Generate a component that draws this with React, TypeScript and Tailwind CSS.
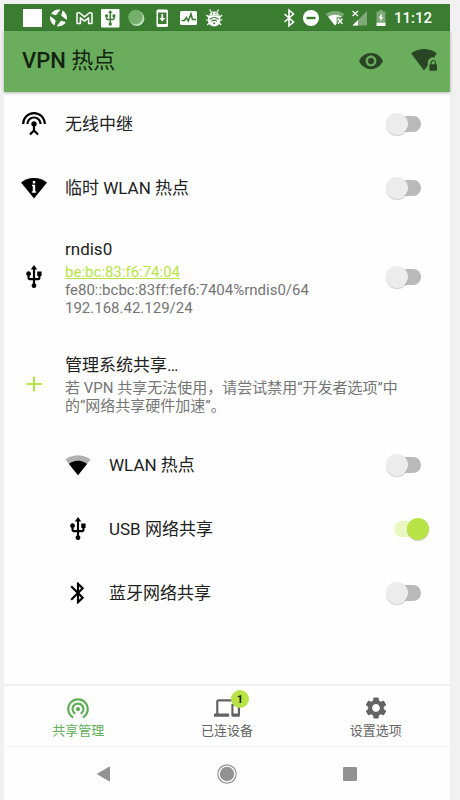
import { useState, type ReactNode } from "react";
import {
  MdAdd,
  MdBluetooth,
  MdDevices,
  MdSettings,
  MdSettingsInputAntenna,
  MdUsb,
  MdVisibility,
  MdWifiTethering,
} from "react-icons/md";

const ICON = "size-[26px] shrink-0";

function WifiLockIcon() {
  return (
    <svg viewBox="0 1 24 24" fill="currentColor" className={ICON} aria-hidden="true">
      <path d="M23 16v-1.500c0-1.400-1.100-2.500-2.500-2.500S18 13.100 18 14.500V16c-.5 0-1 .5-1 1v4c0 .5.5 1 1 1h5c.5 0 1-.5 1-1v-4c0-.5-.5-1-1-1zm-1 0h-3v-1.500c0-.8.7-1.500 1.500-1.500s1.500.7 1.500 1.500V16z" />
      <path d="M15.500 14.500c0-2.800 2.200-5 5-5 .4 0 .7 0 1 .1L23.800 6c-.4-.3-4.900-4-11.800-4C5.300 2 .6 5.700.2 6L12 21.700l3.500-4.500v-2.700z" />
    </svg>
  );
}

function WifiInfoIcon() {
  return (
    <svg viewBox="0 0 24 24" fill="currentColor" className={ICON} aria-hidden="true">
      <path d="M12 2.800C6.950 2.800 3.150 4.600 0 7l12 14.800L24 7C20.850 4.600 17.050 2.800 12 2.800z" />
      <path d="M10.900 5.600h2.200v2.200h-2.200zM10.100 9h3v6h.9v1.400h-4V15h.9v-4.600h-.8z" fill="#fefefe" />
    </svg>
  );
}

function WifiMediumIcon() {
  return (
    <svg viewBox="0 0 24 24" fill="currentColor" className={ICON} aria-hidden="true">
      <path
        fillOpacity=".3"
        d="M12.010 21.490L23.640 7c-.45-.34-4.930-4-11.640-4C5.280 3 .81 6.660.36 7l11.630 14.490.01.01.01-.01z"
      />
      <path d="M3.530 10.950l8.460 10.540.01.01.01-.01 8.460-10.540C20.040 10.620 16.810 8 12 8c-4.810 0-8.040 2.620-8.470 2.950z" />
    </svg>
  );
}

function StatusIcon({ children }: { children: ReactNode }) {
  return (
    <svg viewBox="0 0 20 20" className="size-5 shrink-0" fill="currentColor" aria-hidden="true">
      {children}
    </svg>
  );
}

function StatusBar() {
  return (
    <div className="flex h-[27px] items-center justify-between bg-[#3a7d31] px-[18px] text-white">
      <div className="flex items-center gap-[6px]">
        <StatusIcon>
          <rect x="1" y="1" width="19" height="18" />
        </StatusIcon>
        <StatusIcon>
          <circle cx="10.500" cy="10" r="8.500" />
          <g fill="#3a7d31">
            <circle cx="10.500" cy="10" r="3.800" />
            <path d="M8.500 6.600 12.800 1.200l1.800.8-1.200 5z" />
            <path d="M14 8.300l5.200 4-.9 1.900-5.200-1.500z" />
            <path d="M12.500 13.400 8.200 18.800l-1.800-.8 1.200-5z" />
            <path d="M7 11.700 1.800 7.700l.9-1.900 5.200 1.500z" />
          </g>
        </StatusIcon>
        <StatusIcon>
          <path
            d="M3 15.500V5.200l2.200-.7 5.300 4.300 5.300-4.300 2.200.7v10.300h-3.400V9.800l-4.100 3.300-4.100-3.300v5.700z"
            fill="none"
            stroke="currentColor"
            strokeWidth="1.500"
            strokeLinejoin="round"
          />
        </StatusIcon>
        <StatusIcon>
          <rect x="1" y="1" width="18.500" height="18.500" rx="1" />
          <g transform="translate(1.400 1.200) scale(.74)" fill="#3a7d31">
            <path d="M15 7v4h1v2h-3V5h2l-3-4-3 4h2v8H8v-2.070c.7-.37 1.200-1.080 1.200-1.930 0-1.210-.99-2.200-2.200-2.200-1.210 0-2.200.99-2.200 2.200 0 .85.5 1.560 1.200 1.930V13c0 1.110.89 2 2 2h3v3.050c-.71.370-1.200 1.100-1.200 1.950 0 1.220.99 2.200 2.200 2.200 1.210 0 2.200-.98 2.200-2.200 0-.85-.49-1.580-1.200-1.950V15h3c1.110 0 2-.89 2-2v-2h1V7h-4z" />
          </g>
        </StatusIcon>
        <StatusIcon>
          <circle cx="10.800" cy="10.400" r="7.600" fill="#c8e0c4" />
          <circle cx="9.600" cy="9.200" r="7" fill="#74b06c" stroke="#8fc088" strokeDasharray="1 1" />
        </StatusIcon>
        <StatusIcon>
          <rect x="4.500" y="1.500" width="11.500" height="17.500" rx="1.500" />
          <rect x="6" y="4.500" width="8.500" height="11.500" fill="#3a7d31" />
          <path d="M9.400 6h1.700v4h2.200l-3 3.600L7.200 10h2.200z" />
        </StatusIcon>
        <StatusIcon>
          <rect x="2" y="3" width="17" height="14" rx="1.500" />
          <path d="M3.500 12.500h3l1.800-3 2 3.500L13 6l1.500 5.500H18" fill="none" stroke="#3a7d31" strokeWidth="1.600" />
        </StatusIcon>
        <StatusIcon>
          <path d="M5.500 7.500C5.500 4.800 7.500 3.400 10.200 3.400s4.700 1.400 4.700 4.100z" />
          <path d="M4 7.500h12.400v4.800a6.200 6.200 0 0 1-12.400 0z" />
          <path
            d="M7.300 4 5.800 1.500M13.100 4l1.500-2.500M4.500 9 2.300 7M15.900 9l2.200-2M4.500 12H2M15.900 12h2.500M5.200 15l-2 2M15.200 15l2 2"
            fill="none"
            stroke="currentColor"
            strokeWidth="1.200"
          />
          <path
            d="M5.800 11.200c2.500-2.300 6.300-2.300 8.800 0M7.500 13.400c1.600-1.400 3.800-1.400 5.400 0"
            fill="none"
            stroke="#3a7d31"
            strokeWidth="1.200"
          />
          <circle cx="10.200" cy="15.200" r="1" fill="#3a7d31" />
          <circle cx="8.500" cy="5.800" r=".7" fill="#3a7d31" />
          <circle cx="11.900" cy="5.800" r=".7" fill="#3a7d31" />
        </StatusIcon>
      </div>
      <div className="flex items-center gap-[3px]">
        <StatusIcon>
          <path
            d="m5.500 6 9 8L10 17.800V2.200L14.500 6l-9 8"
            fill="none"
            stroke="currentColor"
            strokeWidth="1.600"
          />
        </StatusIcon>
        <StatusIcon>
          <circle cx="9" cy="10" r="8" />
          <rect x="4.500" y="8.800" width="9" height="2.400" fill="#3a7d31" />
        </StatusIcon>
        <StatusIcon>
          <path d="M10 17.500.8 6.200C6 2 14 2 19.200 6.200z" opacity=".35" />
          <path d="M10 17.500 3.200 8.900c4-3 9.600-3 13.600 0h-5.300v6.700z" />
          <path d="m13 10.800 4.500 5M17.500 10.800l-4.500 5" fill="none" stroke="currentColor" strokeWidth="1.400" />
        </StatusIcon>
        <StatusIcon>
          <path d="M19 3v14.500H4.500z" opacity=".35" />
          <path d="M10 12v5.500H4.500z" />
          <path d="m4.500 3 5.500 5M10 3 4.500 8" fill="none" stroke="currentColor" strokeWidth="1.200" />
        </StatusIcon>
        <StatusIcon>
          <path d="M8 2h4v1.500h2.500V14h-9V3.500H8z" opacity=".35" />
          <path d="M5.500 14.500h9V18h-9z" />
          <path d="M11 5 7.500 10h2l-.5 3.500L12.500 9h-2z" />
        </StatusIcon>
        <time className="text-[15px] leading-5 font-medium">11:12</time>
      </div>
    </div>
  );
}

function AppBar() {
  return (
    <header className="relative flex h-[61px] items-center justify-between bg-[#69ad5d] pr-[13px] pb-0.5 pl-[18px] shadow-[0_1px_3px_rgba(0,0,0,0.3)]">
      <h1 className="text-[22px] leading-7 text-[#12240f]">
        <span className="font-medium">VPN</span> 热点
      </h1>
      <div className="flex items-center gap-[27px] text-[#2a4525]">
        <button type="button" aria-label="显示">
          <MdVisibility className={ICON} />
        </button>
        <button type="button" aria-label="WLAN">
          <WifiLockIcon />
        </button>
      </div>
    </header>
  );
}

interface SwitchRowProps {
  id: string;
  icon: ReactNode;
  title: string;
  on?: boolean;
  nested?: boolean;
  children?: ReactNode;
}

function SwitchRow({ id, icon, title, on = false, nested = false, children }: SwitchRowProps) {
  const [checked, setChecked] = useState(on);
  return (
    <li
      className={`flex min-h-16 items-center gap-[18px] py-[17px] pr-[21px] ${nested ? "pl-[61px]" : "pl-[17px]"}`}
    >
      {icon}
      <div className="min-w-0 flex-1">
        <label htmlFor={id} className="block text-[17px] leading-6 text-[#212121]">
          {title}
        </label>
        {children}
      </div>
      <input
        id={id}
        type="checkbox"
        role="switch"
        checked={checked}
        onChange={(event) => setChecked(event.target.checked)}
        className="relative h-[22px] w-[43px] shrink-0 appearance-none before:absolute before:inset-x-2 before:inset-y-[3px] before:rounded-full before:bg-[#b9b9b9] after:absolute after:top-0 after:left-0 after:size-[22px] after:rounded-full after:bg-[#ececec] after:shadow-[0_1px_1px_rgba(0,0,0,0.2)] checked:before:bg-[#e9f7c0] checked:after:left-[21px] checked:after:bg-[#b8e346]"
      />
    </li>
  );
}

function TetheringList() {
  return (
    <ul>
      <SwitchRow id="repeater" icon={<MdSettingsInputAntenna className={ICON} />} title="无线中继" />
      <SwitchRow id="temporary" icon={<WifiInfoIcon />} title="临时 WLAN 热点" />
      <SwitchRow id="rndis0" icon={<MdUsb className={ICON} />} title="rndis0">
        <p className="mt-0.5 text-[15px] leading-[18px] text-[#757575]">
          <a href="#mac" className="text-[#b8e346] underline">
            be:bc:83:f6:74:04
          </a>
          <br />
          fe80::bcbc:83ff:fef6:7404%rndis0/64
          <br />
          192.168.42.129/24
        </p>
      </SwitchRow>
      <li>
        <button
          type="button"
          className="flex min-h-[99px] w-full items-center gap-[18px] py-[17px] pr-[38px] pl-[17px] text-left"
        >
          <MdAdd className={`${ICON} text-[#b8e346]`} />
          <span className="min-w-0 flex-1">
            <span className="block text-[17px] leading-6 text-[#212121]">管理系统共享…</span>
            <span className="mt-0.5 block text-[15px] leading-[18px] text-[#757575]">
              若 VPN 共享无法使用，请尝试禁用“开发者选项”中的“网络共享硬件加速”。
            </span>
          </span>
        </button>
      </li>
      <SwitchRow id="wlan" nested icon={<WifiMediumIcon />} title="WLAN 热点" />
      <SwitchRow id="usb" nested on icon={<MdUsb className={ICON} />} title="USB 网络共享" />
      <SwitchRow id="bluetooth" nested icon={<MdBluetooth className={ICON} />} title="蓝牙网络共享" />
    </ul>
  );
}

interface TabProps {
  icon: ReactNode;
  label: string;
  active?: boolean;
  badge?: string;
}

function Tab({ icon, label, active = false, badge }: TabProps) {
  return (
    <a
      href="#tab"
      aria-current={active ? "page" : undefined}
      className={`flex flex-col items-center justify-center ${active ? "text-[#5fae57]" : "text-[#636363]"}`}
    >
      <span className="relative">
        {icon}
        {badge && (
          <span className="absolute -top-[5px] -right-[9px] flex size-[18px] items-center justify-center rounded-full bg-[#b8e346] text-[11px] leading-none font-bold text-[#1b220a]">
            {badge}
          </span>
        )}
      </span>
      <span className="text-[13px] leading-5">{label}</span>
    </a>
  );
}

function BottomBar() {
  return (
    <nav className="grid h-[61px] grid-cols-3 border-t border-[#ededed] pt-1 shadow-[0_-1px_1px_rgba(0,0,0,0.03)]">
      <Tab active icon={<MdWifiTethering className={ICON} />} label="共享管理" />
      <Tab icon={<MdDevices className={ICON} />} label="已连设备" badge="1" />
      <Tab icon={<MdSettings className={ICON} />} label="设置选项" />
    </nav>
  );
}

function SystemBar() {
  return (
    <div className="grid h-[54px] grid-cols-3 border-t border-[#f0f0f0] px-[38px] text-[#929292]">
      <button type="button" aria-label="返回" className="flex items-center justify-center">
        <StatusIcon>
          <path d="M3.500 10 15.500 3v14z" stroke="currentColor" strokeLinejoin="round" />
        </StatusIcon>
      </button>
      <button type="button" aria-label="主屏幕" className="flex items-center justify-center">
        <StatusIcon>
          <circle cx="10" cy="10" r="9.200" fill="none" stroke="currentColor" strokeWidth="1.200" />
          <circle cx="10" cy="10" r="7.200" />
        </StatusIcon>
      </button>
      <button type="button" aria-label="最近任务" className="flex items-center justify-center">
        <StatusIcon>
          <rect x="3" y="3" width="14" height="14" rx="1" />
        </StatusIcon>
      </button>
    </div>
  );
}

export default function App() {
  return (
    <div className="flex min-h-screen flex-col bg-[#f1f1f1] pt-1 pr-[10px] pl-1 font-[Roboto,'Noto_Sans_CJK_SC',sans-serif]">
      <div className="flex flex-1 flex-col bg-[#fefefe] text-black">
        <StatusBar />
        <AppBar />
        <main className="flex-1">
          <TetheringList />
        </main>
        <BottomBar />
        <SystemBar />
      </div>
    </div>
  );
}
